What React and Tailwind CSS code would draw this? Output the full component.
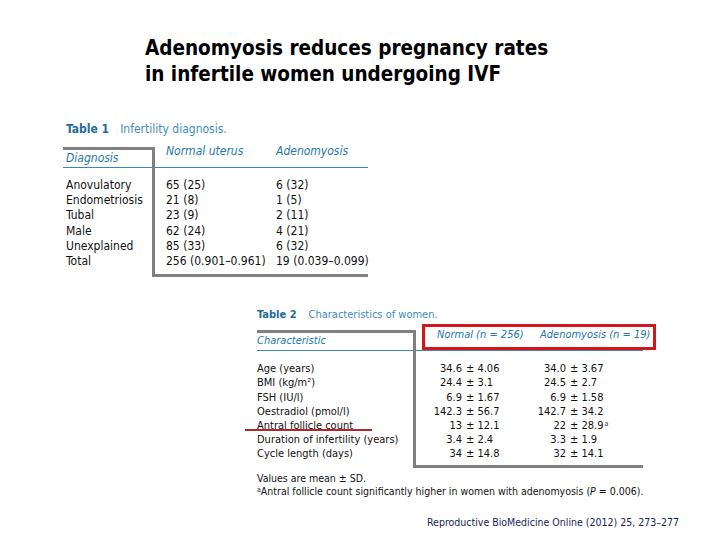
export default function App() {
  const font = { fontFamily: "'DejaVu Sans Condensed', 'DejaVu Sans', sans-serif", fontStretch: "condensed" };

  const t1 = [
    ["Anovulatory", "65 (25)", "6 (32)"],
    ["Endometriosis", "21 (8)", "1 (5)"],
    ["Tubal", "23 (9)", "2 (11)"],
    ["Male", "62 (24)", "4 (21)"],
    ["Unexplained", "85 (33)", "6 (32)"],
    ["Total", "256 (0.901\u20130.961)", "19 (0.039\u20130.099)"],
  ];

  const t2 = [
    ["Age (years)", "34.6", "4.06", "34.0", "3.67"],
    ["BMI (kg/m\u00b2)", "24.4", "3.1", "24.5", "2.7"],
    ["FSH (IU/l)", "6.9", "1.67", "6.9", "1.58"],
    ["Oestradiol (pmol/l)", "142.3", "56.7", "142.7", "34.2"],
    ["Antral follicle count", "13", "12.1", "22", "28.9"],
    ["Duration of infertility (years)", "3.4", "2.4", "3.3", "1.9"],
    ["Cycle length (days)", "34", "14.8", "32", "14.1"],
  ];

  return (
    <div className="w-[720px] h-[540px] bg-white text-[#111] overflow-hidden" style={font}>
      {/* title */}
      <div className="pt-[35px] pl-[145px] text-[20.5px] leading-[26px] font-bold text-black">
        <div>Adenomyosis reduces pregnancy rates</div>
        <div>in infertile women undergoing IVF</div>
      </div>

      {/* table 1 */}
      <div className="ml-[66px] mt-[34px] text-[12px] leading-[16px]">
        <span className="font-bold text-[#1d6d9c]">Table 1</span>
        <span className="ml-[11px] text-[#3d8dbd]">Infertility diagnosis.</span>
      </div>
      <div className="ml-[63px] mt-[10px] flex text-[12px]">
        <div className="w-[89px]">
          <div className="h-[21px] border-t-[3px] border-b border-t-[#808080] border-b-[#3a86b4] pl-[3px] leading-[16px] italic text-[#2479a8]">
            Diagnosis
          </div>
          <div className="pt-[10px] pl-[3px]">
            {t1.map((r) => (
              <div key={r[0]} className="leading-[15.2px] whitespace-nowrap">{r[0]}</div>
            ))}
          </div>
        </div>
        <div className="w-[216px] border-l-[3px] border-b-[3px] border-[#808080] pb-[5px]">
          <div className="h-[21px] border-b border-b-[#3a86b4] flex italic text-[#2479a8] pl-[11px]">
            <div className="w-[110px] shrink-0 -mt-[3px] leading-[14px]">Normal uterus</div>
            <div className="-mt-[3px] leading-[14px]">Adenomyosis</div>
          </div>
          <div className="pt-[10px] pl-[11px]">
            {t1.map((r) => (
              <div key={r[0]} className="flex leading-[15.2px] whitespace-nowrap">
                <div className="w-[110px] shrink-0">{r[1]}</div>
                <div>{r[2]}</div>
              </div>
            ))}
          </div>
        </div>
      </div>

      {/* table 2 */}
      <div className="ml-[257px] mt-[30px] text-[11px] leading-[16px]">
        <span className="font-bold text-[#1d6d9c]">Table 2</span>
        <span className="ml-[12px] text-[#3d8dbd]">Characteristics of women.</span>
      </div>
      <div className="ml-[257px] mt-[7px] flex text-[11px]">
        <div className="w-[156px] shrink-0">
          <div className="h-[21px] border-t-[3px] border-b border-t-[#808080] border-b-[#3a86b4] leading-[16px] italic text-[#2479a8]">
            Characteristic
          </div>
          <div className="pt-[11px]">
            {t2.map((r, i) => (
              <div key={r[0]} className="relative leading-[14.2px] whitespace-nowrap">
                {r[0]}
                {i === 4 && <span className="absolute left-[-12px] top-[10px] w-[127px] h-[1.5px] bg-[#b3262c]" />}
              </div>
            ))}
          </div>
        </div>
        <div className="relative w-[230px] shrink-0 border-l-[3px] border-b-[3px] border-[#808080] pb-[3px]">
          <div className="h-[21px] border-b border-b-[#3a86b4] flex italic text-[#2479a8]">
            <div className="ml-[21px] w-[103px] shrink-0 -mt-[2px] leading-[14px] whitespace-nowrap">Normal (n = 256)</div>
            <div className="-mt-[2px] leading-[14px] whitespace-nowrap">Adenomyosis (n = 19)</div>
          </div>
          <div className="absolute left-[6px] top-[-6px] w-[234px] h-[26px] border-[3px] border-[#d4151b]" />
          <div className="pt-[11px]">
            {t2.map((r, i) => (
              <div key={r[0]} className="flex leading-[14.2px] whitespace-nowrap">
                <div className="w-[46px] shrink-0 text-right">{r[1]}</div>
                <div className="w-[58px] shrink-0 pl-[4px]">± {r[2]}</div>
                <div className="w-[46px] shrink-0 text-right">{r[3]}</div>
                <div className="pl-[4px]">
                  ± {r[4]}
                  {i === 4 && <sup className="text-[7px] text-[#1d2a6c] ml-[1px]">a</sup>}
                </div>
              </div>
            ))}
          </div>
        </div>
      </div>

      {/* footnotes */}
      <div className="ml-[257px] mt-[4px] text-[10.5px] leading-[13.5px] whitespace-nowrap">
        <div>Values are mean ± SD.</div>
        <div>
          <sup className="text-[7px]">a</sup>Antral follicle count significantly higher in women with adenomyosis (<i>P</i> = 0.006).
        </div>
      </div>

      {/* citation */}
      <div className="ml-[427px] mt-[16px] text-[10.5px] leading-[14px] text-[#1a1f5c] whitespace-nowrap">
        Reproductive BioMedicine Online (2012) 25, 273–277
      </div>
    </div>
  );
}
